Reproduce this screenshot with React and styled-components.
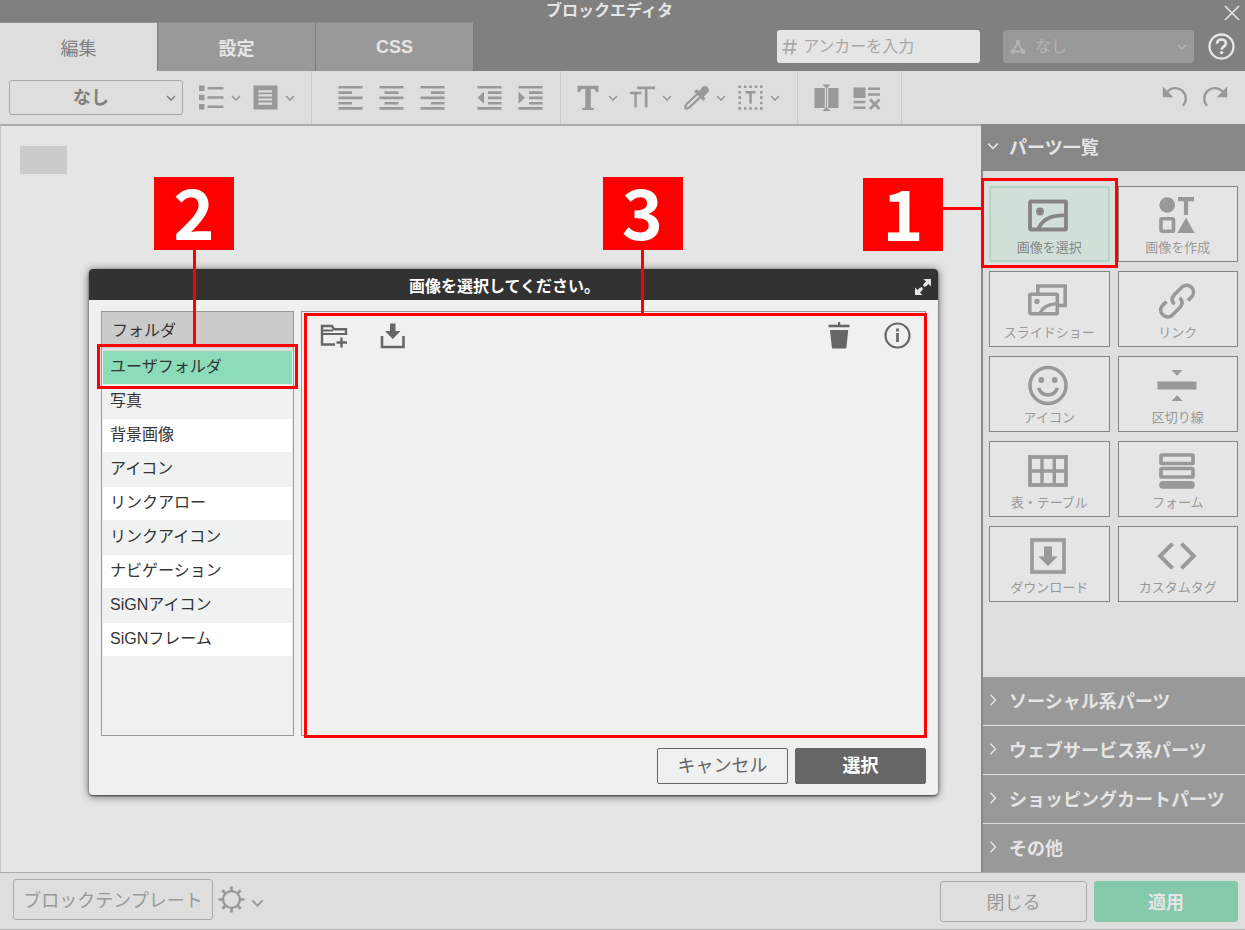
import React from 'react';
import styled, { createGlobalStyle } from 'styled-components';

const GlobalStyle = createGlobalStyle`
  *, *::before, *::after { box-sizing: border-box; }
  body {
    margin: 0;
    background: #dedede;
    color: #808080;
    font-family: "Liberation Sans", "Noto Sans CJK JP", sans-serif;
    font-size: 16px;
  }
  button, input, select { font: inherit; color: inherit; margin: 0; }
  button { cursor: pointer; }
  svg { display: block; flex: none; }
  h1, h2, h3, ul, p { margin: 0; padding: 0; }
`;

const Page = styled.div`
  position: relative;
  display: flex;
  flex-direction: column;
  min-height: 100vh;
`;

/* ---------- header ---------- */
const Header = styled.header`
  background: #808080;
  color: #e5e5e5;
`;
const TitleBar = styled.div`
  display: flex;
  align-items: center;
  height: 22px;
`;
const Title = styled.h1`
  flex: 1;
  text-align: center;
  font-size: 16px;
  line-height: 20px;
  font-weight: 700;
`;
const PlainButton = styled.button`
  display: flex;
  align-items: center;
  justify-content: center;
  gap: ${(p) => p.$gap || 0}px;
  padding: 0;
  border: 0;
  background: none;
`;
const CloseSlot = styled.div`
  width: 26px;
  height: 22px;
  padding-top: 4px;
  display: flex;
  align-items: center;
  justify-content: center;
`;
const HeaderRow = styled.div`
  display: flex;
  justify-content: space-between;
  height: 49px;
`;
const Tabs = styled.nav`
  display: flex;
`;
const Tab = styled.button`
  width: 158px;
  padding: 0;
  border: 0;
  border-top: 1px solid #909090;
  border-right: 1px solid #7c7c7c;
  font-size: 18px;
  font-weight: ${(p) => (p.$active ? 400 : 700)};
  color: ${(p) => (p.$active ? '#808080' : '#e5e5e5')};
  background: ${(p) => (p.$active ? '#dedede' : '#999')};
`;
const HeaderTools = styled.div`
  display: flex;
  align-items: center;
  padding-right: 10px;
`;
const AnchorField = styled.label`
  display: flex;
  align-items: center;
  gap: 5px;
  width: 203px;
  height: 33px;
  padding: 0 5px;
  margin-right: 23px;
  border-radius: 3px;
  background: #e5e5e5;
  color: #a8a8a8;
`;
const AnchorInput = styled.input`
  flex: 1;
  min-width: 0;
  padding: 0;
  border: 0;
  outline: 0;
  background: none;
  font-size: 16px;
  &::placeholder { color: #a8a8a8; opacity: 1; }
`;
const SelectWrap = styled.label`
  display: flex;
  align-items: center;
  position: relative;
  width: ${(p) => p.$width}px;
  height: ${(p) => p.$height}px;
  padding: 0 6px;
  border: 1px solid ${(p) => (p.$dark ? '#999' : '#aaa')};
  border-radius: 3px;
  background: ${(p) => (p.$dark ? '#999' : 'none')};
  color: ${(p) => (p.$dark ? '#b4b4b4' : '#808080')};
`;
const Select = styled.select`
  flex: 1;
  min-width: 0;
  padding: 0 0 0 ${(p) => (p.$center ? 0 : 9)}px;
  border: 0;
  outline: 0;
  appearance: none;
  background: none;
  opacity: 1;
  font-size: ${(p) => (p.$center ? 18 : 16)}px;
  font-weight: ${(p) => (p.$center ? 700 : 400)};
  text-align-last: ${(p) => (p.$center ? 'center' : 'left')};
`;
const HelpButton = styled(PlainButton)`
  margin-left: 14px;
`;

/* ---------- toolbar ---------- */
const Toolbar = styled.div`
  display: flex;
  height: 53px;
  background: #dedede;
  color: #999;
`;
const Group = styled.div`
  display: flex;
  align-items: center;
  gap: ${(p) => p.$gap}px;
  padding: 0 ${(p) => p.$right}px 0 ${(p) => p.$left}px;
  border-right: ${(p) => (p.$last ? 0 : 1)}px solid #cbcbcb;
  margin-left: ${(p) => (p.$last ? 'auto' : 0)};
`;
const Cluster = styled.div`
  display: flex;
  gap: ${(p) => p.$gap}px;
`;

/* ---------- editor ---------- */
const Editor = styled.div`
  flex: 1;
  display: flex;
`;
const Canvas = styled.main`
  flex: 1;
  padding: 20px 19px;
  border-top: 2px solid #ababab;
  border-left: 1px solid #c4c4c4;
  background: #e5e5e5;
`;
const Block = styled.div`
  width: 47px;
  height: 28px;
  background: #cbcbcb;
`;
const Sidebar = styled.aside`
  display: flex;
  flex-direction: column;
  width: 264px;
  border-left: 2px solid #888;
  background: #dedede;
`;
const SectionButton = styled.button`
  display: flex;
  align-items: center;
  gap: 10px;
  width: 100%;
  height: ${(p) => (p.$open ? 47 : 48)}px;
  padding: 0 0 3px 4px;
  border: 0;
  background: ${(p) => (p.$open ? '#878787' : '#999')};
  color: #e5e5e5;
  font-size: 18px;
  font-weight: 700;
  white-space: nowrap;
`;
const ClosedSections = styled.div`
  display: grid;
  gap: 1px;
  margin-top: auto;
`;
const Parts = styled.div`
  display: grid;
  grid-template-columns: 1fr 1fr;
  gap: 9px 8px;
  padding: 15px 7px 15px 6px;
`;
const Part = styled.button`
  position: relative;
  display: flex;
  flex-direction: column;
  align-items: center;
  height: 76px;
  padding: ${(p) => (p.$active ? 7 : 8)}px 0 0;
  border: ${(p) => (p.$active ? '2px solid #b3d6c6' : '1px solid #858585')};
  background: ${(p) => (p.$active ? '#d2dfd8' : '#e5e5e5')};
  color: ${(p) => (p.$active ? '#858585' : '#999')};
  font-size: 13px;
  line-height: 22px;
`;

/* ---------- footer ---------- */
const Footer = styled.footer`
  display: flex;
  align-items: center;
  height: 58px;
  padding: 0 7px 0 13px;
  border-top: 1px solid #ababab;
  border-bottom: 1px solid #b4b4b4;
  background: #dedede;
  color: #999;
`;
const FooterButton = styled.button`
  width: ${(p) => p.$width}px;
  height: 41px;
  padding: 0;
  border: 1px solid ${(p) => (p.$primary ? '#83c9aa' : '#ababab')};
  border-radius: 3px;
  background: ${(p) => (p.$primary ? '#83c9aa' : 'none')};
  color: ${(p) => (p.$primary ? '#e5e5e5' : '#999')};
  font-size: 18px;
  font-weight: ${(p) => (p.$primary ? 700 : 400)};
  white-space: nowrap;
`;
const FooterTools = styled.div`
  display: flex;
  align-items: center;
  gap: 5px;
  padding-bottom: 4px;
`;
const FooterActions = styled.div`
  display: flex;
  gap: 7px;
  margin-left: auto;
`;
const ChevronSlot = styled.span`
  padding-top: 8px;
`;

/* ---------- image dialog ---------- */
const Dialog = styled.section`
  position: absolute;
  top: 269px;
  left: 89px;
  right: 307px;
  border-radius: 4px;
  background: #eff1f1;
  box-shadow: 0 1px 2px rgba(0, 0, 0, 0.6), 0 1px 9px rgba(0, 0, 0, 0.6);
  color: #333;
`;
const DialogTitleBar = styled.div`
  display: flex;
  align-items: center;
  height: 31px;
  padding: 4px 6px 0;
  border-radius: 4px 4px 0 0;
  background: #323232;
  color: #fff;
`;
const DialogTitle = styled.h2`
  flex: 1;
  text-align: center;
  font-size: 16px;
  line-height: 24px;
  font-weight: 700;
`;
const DialogBody = styled.div`
  display: flex;
  gap: 7px;
  padding: 11px 12px 12px;
`;
const Folders = styled.div`
  width: 193px;
  min-height: 425px;
  border: 1px solid #999;
`;
const FoldersHead = styled.h3`
  height: 39px;
  padding: 0 10px;
  border-bottom: 3px solid #dedede;
  background: #cbcbcb;
  font-size: 16px;
  line-height: 38px;
  font-weight: 400;
`;
const FolderList = styled.ul`
  list-style: none;
`;
const FolderItem = styled.li`
  position: relative;
  padding: 0 1px;
`;
const FolderButton = styled.button`
  display: block;
  width: 100%;
  height: 34px;
  padding: 0 7px 6px;
  border: 0;
  border-bottom: 1px solid #eff1f1;
  background: ${(p) => (p.$active ? '#8bdcb9' : p.$white ? '#fff' : '#f0f1f1')};
  color: #333;
  font-size: 16px;
  text-align: left;
`;
const FilePane = styled.div`
  position: relative;
  flex: 1;
  border: 1px solid #999;
  color: #666;
`;
const FileTools = styled.div`
  display: flex;
  align-items: center;
  justify-content: space-between;
  padding: 10px 14px 0 18px;
`;
const DialogActions = styled.div`
  display: flex;
  justify-content: flex-end;
  gap: 7px;
  padding: 0 12px 11px;
`;
const DialogButton = styled.button`
  width: 131px;
  height: 36px;
  padding: 0 0 4px;
  border: 1px solid #666;
  border-radius: 2px;
  background: ${(p) => (p.$primary ? '#666' : 'none')};
  color: ${(p) => (p.$primary ? '#fff' : '#666')};
  font-size: 18px;
  font-weight: ${(p) => (p.$primary ? 700 : 400)};
`;

/* ---------- numbered callouts ---------- */
const Highlight = styled.span`
  position: absolute;
  z-index: 2;
  top: ${(p) => p.$top}px;
  right: ${(p) => p.$right}px;
  bottom: ${(p) => p.$bottom}px;
  left: ${(p) => p.$left}px;
  border: 3px solid #f00;
  pointer-events: none;
`;
const Callout = styled.span`
  position: absolute;
  display: flex;
  align-items: center;
  ${(p) => (p.$side
    ? 'right: 100%; top: -3px;'
    : `flex-direction: column; bottom: 100%; left: ${p.$left};`)}
`;
const Badge = styled.span`
  width: 80px;
  height: 73px;
  background: #f00;
  color: #fff;
  font-family: "Noto Sans CJK JP", sans-serif;
  font-size: 70px;
  line-height: 65px;
  font-weight: 700;
  text-align: center;
`;
const Lead = styled.span`
  flex: none;
  width: ${(p) => p.$w}px;
  height: ${(p) => p.$h}px;
  margin-bottom: ${(p) => (p.$w > p.$h ? 12 : 0)}px;
  background: #f00;
`;

/* ---------- icons ---------- */
const Svg = ({ w = 25, h = 25, box, children }) => (
  <svg width={w} height={h} viewBox={box || `0 0 ${w} ${h}`} fill="none" stroke="currentColor" aria-hidden="true">
    {children}
  </svg>
);
const Chevron = ({ w = 10, h = 6, dir = 'down', sw = 1.6 }) =>
  dir === 'down' ? (
    <Svg w={w} h={h} box="0 0 10 6"><path d="M1 1l4 4 4-4" strokeWidth={sw} /></Svg>
  ) : (
    <Svg w={12} h={12}><path d="M3.500 .8L8.500 6l-5 5.200" strokeWidth={sw} /></Svg>
  );
const ListIcon = () => (
  <Svg>
    <path d="M0 3.200h5.500M0 12.500h5.500M0 21.700h5.500" strokeWidth="5.600" />
    <path d="M8.500 3.200h16M8.500 12.500h16M8.500 21.700h16" strokeWidth="2.600" />
  </Svg>
);
const BoxListIcon = () => (
  <Svg>
    <path d="M.5 .5h24v24H.5z" fill="currentColor" stroke="none" />
    <path d="M5.500 6.300h13.500M5.500 10.400h13.500M5.500 14.500h13.500M5.500 18.600h13.500" stroke="#dedede" strokeWidth="2.200" />
  </Svg>
);
const alignRows = {
  left: 'M.5 7.600h13.500M.5 18.200h13.500',
  center: 'M5.500 7.600h14M5.500 18.200h14',
  right: 'M11 7.600h13.500M11 18.200h13.500',
};
const AlignIcon = ({ kind }) => (
  <Svg>
    <path d="M.5 2.300h24M.5 12.900h24M.5 23.400h24" strokeWidth="2.600" />
    <path d={alignRows[kind]} strokeWidth="2.600" />
  </Svg>
);
const IndentIcon = ({ out }) => (
  <Svg>
    <path d="M.5 2.300h24M11 7.600h13.500M11 12.900h13.500M11 18.200h13.500M.5 23.400h24" strokeWidth="2.600" />
    <path d={out ? 'M7 6.800v12L.5 12.800z' : 'M.5 6.800v12L7 12.800z'} fill="currentColor" stroke="none" />
  </Svg>
);
const TextIcon = () => (
  <Svg>
    <path d="M1.500 .7h21v6h-2.800c-.2-1.900-.8-2.800-2.600-2.800h-2.300v17.500c0 1 .6 1.500 1.700 1.500h1.200v2.400h-11.300v-2.400h1.200c1.100 0 1.700-.5 1.700-1.500V3.900H7c-1.800 0-2.500.9-2.700 2.800H1.500z" fill="currentColor" stroke="none" />
  </Svg>
);
const TextSizeIcon = () => (
  <Svg box="1 0 26 26">
    <path d="M8.500 3h18.500M17.800 3v20.500" strokeWidth="2.800" />
    <path d="M0 8.300h13M6.800 8v15.500" strokeWidth="2.500" />
  </Svg>
);
const DropperIcon = () => (
  <Svg>
    <path d="M12.500 4.300l2.500 1.700 3.400-4a4 4 0 0 1 5.600 5.600l-4.200 3.800 1.700 2.400-2.300 2.300L10.200 6.600z" fill="currentColor" stroke="none" />
    <path d="M13.500 8.800L2.700 19c-1.200 1.300-1.700 3-1.200 4.300 1.100.5 2.900 0 4.200-1.200L16.600 11.900" strokeWidth="2.200" />
  </Svg>
);
const TextAreaIcon = () => (
  <Svg>
    <path d="M.5 1.800h24M.5 23.500h24M1.700 .5v24M23.300 .5v24" strokeWidth="2.500" strokeDasharray="2.600 2.800" />
    <path d="M7.500 7.200h10M12.500 7.200v11.500" strokeWidth="2.500" />
  </Svg>
);
const SplitIcon = () => (
  <Svg w={25} h={27}>
    <path d="M.5 4h10.300v20H.5zM14.200 4h10.300v20H14.200zM8.500 .5h8l-4 4zM8.500 27h8l-4-4z" fill="currentColor" stroke="none" />
    <path d="M12.500 3v22" strokeWidth="1" />
  </Svg>
);
const ClearIcon = () => (
  <Svg w={28} h={25}>
    <path d="M.5 2.500h12v10.500H.5z" fill="currentColor" stroke="none" />
    <path d="M15 3.800h12M15 9.500h12M.5 17h12M.5 22.800h12" strokeWidth="2.600" />
    <path d="M17 14.500l9.500 9.500M26.500 14.500L17 24" strokeWidth="2.600" />
  </Svg>
);
const UndoIcon = ({ redo }) => (
  <Svg>
    <g transform={redo ? 'matrix(-1 0 0 1 25 0)' : undefined}>
      <path d="M5.500 6.500A10.200 10.200 0 0 1 21 20.800" strokeWidth="2.400" />
      <path d="M.8 1.500v10.800h10.500z" fill="currentColor" stroke="none" />
    </g>
  </Svg>
);
const HashIcon = () => (
  <Svg w={16} h={18}>
    <path d="M1.500 5.800h13.500M.5 11.800h13.500M5.700 1.500L3.700 16.500M11.700 1.500L9.700 16.500" strokeWidth="1.700" />
  </Svg>
);
const NodesIcon = () => (
  <Svg w={16} h={16}>
    <path d="M8 3.500L3 12.500h10z" strokeWidth="1.800" />
    <circle cx="8" cy="3" r="2.200" fill="currentColor" stroke="none" />
    <circle cx="2.700" cy="12.700" r="2.400" fill="currentColor" stroke="none" />
    <circle cx="13.300" cy="12.700" r="2.400" fill="currentColor" stroke="none" />
  </Svg>
);
const HelpIcon = () => (
  <Svg w={27} h={27}>
    <circle cx="13.500" cy="13.500" r="12" strokeWidth="2.300" />
    <path d="M9 10.800c.1-2.600 1.900-4.300 4.500-4.300 2.600 0 4.400 1.600 4.400 3.900 0 3.200-4.300 3.300-4.300 6.300" strokeWidth="2.600" />
    <circle cx="13.600" cy="19.600" r="1.700" fill="currentColor" stroke="none" />
  </Svg>
);
const GearIcon = () => (
  <Svg w={27} h={27}>
    <circle cx="13.500" cy="13.500" r="8.400" strokeWidth="2.300" />
    <path d="M13.500 .5v5M13.500 21.500v5M.5 13.500h5M21.500 13.500h5M4.300 4.300l3.500 3.500M19.200 19.200l3.500 3.500M4.300 22.700l3.500-3.500M19.200 7.800l3.500-3.500" strokeWidth="2.700" />
  </Svg>
);
const ExpandIcon = () => (
  <Svg w={18} h={18}>
    <path d="M9.500 1H17v7.500l-2.500-2.500-2.800 2.800-2.500-2.500L12 3.500zM8.500 17H1V9.500L3.500 12l2.800-2.800 2.500 2.500L6 14.500z" fill="#e5e5e5" stroke="none" />
    <path d="M5.500 12.500l7-7" stroke="#e5e5e5" strokeWidth="2" strokeDasharray="4 1.900" />
  </Svg>
);
const FolderAddIcon = () => (
  <Svg w={28} h={26}>
    <path d="M15 21.500H2V3h10l2 3.200h12V12" strokeWidth="2.400" />
    <path d="M2 11h25.200M2 7.500h11" strokeWidth="2" />
    <path d="M21.500 14.500v10M16.500 19.500h10.500" strokeWidth="2.400" />
  </Svg>
);
const SaveIcon = () => (
  <Svg w={26} h={26}>
    <path d="M2 13v11h21.500V13" strokeWidth="2.600" />
    <path d="M10 .5h5.500V8h5l-7.700 8L5 8h5z" fill="currentColor" stroke="none" />
  </Svg>
);
const TrashIcon = () => (
  <Svg w={22} h={27}>
    <path d="M.5 4h21" strokeWidth="2.600" />
    <path d="M10 0h2.200v4H10zM2 8h18.200l-1.700 17.300c-.1.800-.6 1.200-1.400 1.200H5.200c-.8 0-1.300-.4-1.400-1.200z" fill="currentColor" stroke="none" />
  </Svg>
);
const InfoIcon = () => (
  <Svg w={27} h={27}>
    <circle cx="13.500" cy="13.500" r="12" strokeWidth="2.200" />
    <path d="M13.500 6.500v3M13.500 11v9" strokeWidth="2.700" />
  </Svg>
);

/* icons of the part tiles, drawn in a 42 x 42 box */
const partIcons = {
  picture: (
    <>
      <rect x="3" y="6.500" width="36" height="28" rx="1" strokeWidth="3.800" />
      <circle cx="13" cy="16.500" r="3.900" fill="currentColor" stroke="none" />
      <path d="M11.500 33.500C15.500 24.500 25 20 38 20.500" strokeWidth="3.800" />
    </>
  ),
  create: (
    <>
      <circle cx="11.200" cy="10" r="7.800" fill="currentColor" stroke="none" />
      <path d="M22 4.200h16M30 4.200v15.800" strokeWidth="4.200" />
      <rect x="5" y="23.800" width="12.500" height="12.500" rx="1" strokeWidth="3.600" />
      <path d="M30 22.500l8.700 15.500H21.300z" fill="currentColor" stroke="none" />
    </>
  ),
  slides: (
    <>
      <path d="M10.800 13V6h27.400v19.500H32" strokeWidth="3.600" />
      <rect x="2.800" y="14.200" width="27.500" height="19.500" rx="1" strokeWidth="3.600" />
      <circle cx="10" cy="21.500" r="2.700" fill="currentColor" stroke="none" />
      <path d="M13 33c2.500-5.500 8-8.800 17-9.300" strokeWidth="3.200" />
    </>
  ),
  link: (
    <>
      <path d="M32 20.500l4-4c5-6.500-3.300-14.700-9.700-9.700l-8 8c-2.800 3.200-2.800 6.500.2 9.500" strokeWidth="3.600" />
      <path d="M10.500 21.500l-4.300 4.300c-5 6.300 3.500 14.400 9.700 9.700l8-8c2.800-3.200 2.800-6.500-.2-9.700" strokeWidth="3.600" />
    </>
  ),
  smile: (
    <>
      <circle cx="21" cy="20.500" r="18" strokeWidth="3.500" />
      <circle cx="14.300" cy="15" r="2.900" fill="currentColor" stroke="none" />
      <circle cx="27.700" cy="15" r="2.900" fill="currentColor" stroke="none" />
      <path d="M11.500 23c3.700 9.300 15.300 9.300 19 0" strokeWidth="3.500" />
    </>
  ),
  rule: (
    <path d="M1.500 16.500h39v8h-39zM15.500 5h11l-5.500 5.800zM15.500 36h11l-5.500-5.800z" fill="currentColor" stroke="none" />
  ),
  table: (
    <>
      <rect x="3" y="7" width="36" height="28" strokeWidth="3.800" />
      <path d="M3 21h36M15 7v28M27.300 7v28" strokeWidth="3.400" />
    </>
  ),
  form: (
    <>
      <rect x="5" y="5" width="32" height="8.500" rx="1" strokeWidth="3.700" />
      <rect x="5" y="18.500" width="32" height="8.500" rx="1" strokeWidth="3.700" />
      <rect x="3.200" y="31" width="35.500" height="7.800" rx="3.500" fill="currentColor" stroke="none" />
    </>
  ),
  download: (
    <>
      <rect x="5" y="5" width="32" height="32" strokeWidth="3.600" />
      <path d="M17 11.500h8v10h5.500L21 31l-9.500-9.500H17z" fill="currentColor" stroke="none" />
    </>
  ),
  code: (
    <path d="M16.500 8.700L4.200 21l12.300 12.300M25.500 8.700L37.800 21 25.500 33.300" strokeWidth="4" />
  ),
};

const parts = [
  ['picture', '画像を選択'],
  ['create', '画像を作成'],
  ['slides', 'スライドショー'],
  ['link', 'リンク'],
  ['smile', 'アイコン'],
  ['rule', '区切り線'],
  ['table', '表・テーブル'],
  ['form', 'フォーム'],
  ['download', 'ダウンロード'],
  ['code', 'カスタムタグ'],
];
const sections = ['ソーシャル系パーツ', 'ウェブサービス系パーツ', 'ショッピングカートパーツ', 'その他'];
const folders = [
  'ユーザフォルダ', '写真', '背景画像', 'アイコン', 'リンクアロー',
  'リンクアイコン', 'ナビゲーション', 'SiGNアイコン', 'SiGNフレーム',
];

const MenuTool = ({ label, children }) => (
  <PlainButton type="button" aria-label={label} $gap={7}>
    {children}
    <Chevron />
  </PlainButton>
);
const Tool = ({ label, children }) => (
  <PlainButton type="button" aria-label={label}>{children}</PlainButton>
);

export default function App() {
  return (
    <Page>
      <GlobalStyle />
      <Header>
        <TitleBar>
          <Title>ブロックエディタ</Title>
          <CloseSlot>
            <Tool label="閉じる">
              <Svg w={16} h={16}><path d="M1 1l14 14M15 1L1 15" strokeWidth="1.600" /></Svg>
            </Tool>
          </CloseSlot>
        </TitleBar>
        <HeaderRow>
          <Tabs>
            <Tab type="button" $active>編集</Tab>
            <Tab type="button">設定</Tab>
            <Tab type="button">CSS</Tab>
          </Tabs>
          <HeaderTools>
            <AnchorField>
              <HashIcon />
              <AnchorInput type="text" placeholder="アンカーを入力" aria-label="アンカー" />
            </AnchorField>
            <SelectWrap $dark $width={191} $height={33}>
              <NodesIcon />
              <Select aria-label="リンク先"><option>なし</option></Select>
              <Chevron />
            </SelectWrap>
            <HelpButton type="button" aria-label="ヘルプ"><HelpIcon /></HelpButton>
          </HeaderTools>
        </HeaderRow>
      </Header>

      <Toolbar>
        <Group $left={9} $right={16} $gap={16}>
          <SelectWrap $width={174} $height={35}>
            <Select $center aria-label="スタイル"><option>なし</option></Select>
            <Chevron />
          </SelectWrap>
          <Cluster $gap={12}>
            <MenuTool label="リスト"><ListIcon /></MenuTool>
            <MenuTool label="ボックス"><BoxListIcon /></MenuTool>
          </Cluster>
        </Group>
        <Group $left={26} $right={17} $gap={32}>
          <Cluster $gap={16}>
            <Tool label="左揃え"><AlignIcon kind="left" /></Tool>
            <Tool label="中央揃え"><AlignIcon kind="center" /></Tool>
            <Tool label="右揃え"><AlignIcon kind="right" /></Tool>
          </Cluster>
          <Cluster $gap={16}>
            <Tool label="インデント解除"><IndentIcon out /></Tool>
            <Tool label="インデント"><IndentIcon /></Tool>
          </Cluster>
        </Group>
        <Group $left={15} $right={17} $gap={12}>
          <MenuTool label="文字"><TextIcon /></MenuTool>
          <MenuTool label="文字サイズ"><TextSizeIcon /></MenuTool>
          <MenuTool label="色"><DropperIcon /></MenuTool>
          <MenuTool label="文字範囲"><TextAreaIcon /></MenuTool>
        </Group>
        <Group $left={16} $right={20} $gap={14}>
          <Tool label="分割"><SplitIcon /></Tool>
          <Tool label="回り込み解除"><ClearIcon /></Tool>
        </Group>
        <Group $last $left={16} $right={17} $gap={16}>
          <Tool label="元に戻す"><UndoIcon /></Tool>
          <Tool label="やり直す"><UndoIcon redo /></Tool>
        </Group>
      </Toolbar>

      <Editor>
        <Canvas><Block /></Canvas>
        <Sidebar>
          <SectionButton type="button" $open>
            <Chevron w={12} h={8} sw={1.3} />パーツ一覧
          </SectionButton>
          <Parts>
            {parts.map(([icon, label], i) => (
              <Part type="button" key={icon} $active={i === 0}>
                <Svg w={42} h={42} box="1 0 42 42">{partIcons[icon]}</Svg>
                {label}
                {i === 0 && (
                  <Highlight $top={-10} $right={-10} $bottom={-8} $left={-10}>
                    <Callout $side>
                      <Badge>1</Badge>
                      <Lead $w={41} $h={3} />
                    </Callout>
                  </Highlight>
                )}
              </Part>
            ))}
          </Parts>
          <ClosedSections>
            {sections.map((name) => (
              <SectionButton type="button" key={name}>
                <Chevron dir="right" sw={1.4} />{name}
              </SectionButton>
            ))}
          </ClosedSections>
        </Sidebar>
      </Editor>

      <Footer>
        <FooterTools>
          <FooterButton type="button" $width={200}>ブロックテンプレート</FooterButton>
          <PlainButton type="button" aria-label="設定" $gap={6}>
            <GearIcon />
            <ChevronSlot><Chevron w={13} h={8} sw={1.5} /></ChevronSlot>
          </PlainButton>
        </FooterTools>
        <FooterActions>
          <FooterButton type="button" $width={147}>閉じる</FooterButton>
          <FooterButton type="button" $width={144} $primary>適用</FooterButton>
        </FooterActions>
      </Footer>

      <Dialog role="dialog" aria-label="画像を選択してください。">
        <DialogTitleBar>
          <DialogTitle>画像を選択してください。</DialogTitle>
          <Tool label="拡大"><ExpandIcon /></Tool>
        </DialogTitleBar>
        <DialogBody>
          <Folders>
            <FoldersHead>フォルダ</FoldersHead>
            <FolderList>
              {folders.map((name, i) => (
                <FolderItem key={name}>
                  <FolderButton type="button" $active={i === 0} $white={i % 2 === 0}>{name}</FolderButton>
                  {i === 0 && (
                    <Highlight $top={-7} $right={-5} $bottom={-4} $left={-5}>
                      <Callout $left="54px">
                        <Badge>2</Badge>
                        <Lead $w={3} $h={97} />
                      </Callout>
                    </Highlight>
                  )}
                </FolderItem>
              ))}
            </FolderList>
          </Folders>
          <FilePane>
            <FileTools>
              <Cluster $gap={32}>
                <Tool label="フォルダを追加"><FolderAddIcon /></Tool>
                <Tool label="アップロード"><SaveIcon /></Tool>
              </Cluster>
              <Cluster $gap={34}>
                <Tool label="削除"><TrashIcon /></Tool>
                <Tool label="情報"><InfoIcon /></Tool>
              </Cluster>
            </FileTools>
            <Highlight $top={1} $right={-2} $bottom={-3} $left={2}>
              <Callout $left="calc(50% - 13px)">
                <Badge>3</Badge>
                <Lead $w={3} $h={66} />
              </Callout>
            </Highlight>
          </FilePane>
        </DialogBody>
        <DialogActions>
          <DialogButton type="button">キャンセル</DialogButton>
          <DialogButton type="button" $primary>選択</DialogButton>
        </DialogActions>
      </Dialog>
    </Page>
  );
}
